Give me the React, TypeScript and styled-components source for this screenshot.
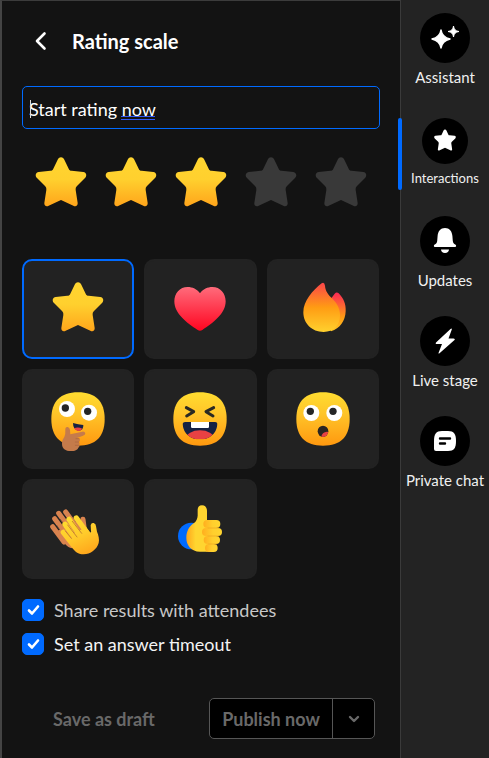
import React, { useState } from "react";
import styled, { createGlobalStyle } from "styled-components";

const GlobalStyle = createGlobalStyle`
  * { box-sizing: border-box; }
  body { margin: 0; background: #131313; color: #fff; font-family: Lato, "Open Sans", sans-serif; }
  button, input { font-family: inherit; }
`;

const Page = styled.div`
  display: flex;
  min-height: 100vh;
`;

const Panel = styled.main`
  flex: 1;
  min-width: 0;
  display: flex;
  flex-direction: column;
  padding: 24px 20px 0;
  border-left: 2px solid #444;
  border-top: 1px solid #3c3c3c;
  background: #131313;
`;

const Header = styled.header`
  display: flex;
  align-items: center;
  gap: 20px;
  height: 32px;
  padding-left: 8px;
`;

const BackButton = styled.button`
  display: flex;
  padding: 0;
  border: 0;
  background: none;
  color: #fff;
  cursor: pointer;
`;

const Title = styled.h1`
  margin: 0;
  font-size: 20px;
  line-height: 24px;
  font-weight: 700;
`;

const Field = styled.div`
  position: relative;
  margin-top: 29px;
`;

const TextInput = styled.input`
  display: block;
  width: 100%;
  height: 43px;
  padding: 2px 6px 0;
  border: 1px solid #006aff;
  border-radius: 5px;
  outline: 0;
  background: #131313;
  color: #fff;
  font-size: 18px;
`;

const Caret = styled.span`
  position: absolute;
  left: 8px;
  top: 14px;
  width: 1px;
  height: 18px;
  background: #ddd;
`;

const WordMark = styled.span`
  position: absolute;
  left: 99px;
  top: 30px;
  width: 34px;
  height: 4px;
  border: solid #3358f4;
  border-width: 1px 0;
`;

const Stars = styled.div`
  display: flex;
  gap: 14px;
  margin: 27px 0 0 11px;
`;

const StarButton = styled.button`
  display: flex;
  padding: 0;
  border: 0;
  background: none;
  cursor: pointer;
`;

const Glyph = styled.svg`
  display: block;
  width: 56px;
  height: 56px;
  overflow: visible;
`;

const Tiles = styled.div`
  display: grid;
  grid-template-columns: repeat(3, 1fr);
  gap: 10px;
  margin-top: 47px;
  padding-right: 1px;
`;

const Tile = styled.button<{ $selected: boolean }>`
  display: flex;
  align-items: center;
  justify-content: center;
  height: 100px;
  padding: 0;
  border: 2px solid ${(p) => (p.$selected ? "#006aff" : "#222")};
  border-radius: 10px;
  background: #222;
  cursor: pointer;
`;

const Options = styled.div`
  display: flex;
  flex-direction: column;
  gap: 10px;
  margin-top: 19px;
`;

const Option = styled.label<{ $bright?: boolean }>`
  display: flex;
  align-items: center;
  gap: 10px;
  font-size: 18px;
  line-height: 24px;
  color: ${(p) => (p.$bright ? "#f4f4f4" : "#c8c8c8")};
`;

const BoxHolder = styled.span`
  display: grid;
  width: 22px;
  height: 22px;

  > * {
    grid-area: 1 / 1;
  }

  > svg {
    pointer-events: none;
  }
`;

const Check = styled.input`
  appearance: none;
  width: 22px;
  height: 22px;
  margin: 0;
  border: 1px solid #006aff;
  border-radius: 5px;
  background: #131313;

  &:checked {
    background: #006aff;
  }
`;

const Footer = styled.footer`
  display: flex;
  align-items: center;
  justify-content: space-between;
  margin-top: 42px;
  padding: 0 5px 0 31px;
`;

const DraftButton = styled.button`
  padding: 0;
  border: 0;
  background: none;
  color: #696969;
  font-size: 18px;
  font-weight: 700;
  line-height: 24px;
`;

const Split = styled.div`
  display: flex;
  height: 41px;
  border: 1px solid #565656;
  border-radius: 5px;
  background: #000;
  overflow: hidden;
`;

const SplitButton = styled.button<{ $menu?: boolean }>`
  display: flex;
  align-items: center;
  justify-content: center;
  padding: 0;
  width: ${(p) => (p.$menu ? "42px" : "122px")};
  border: 0;
  border-left: ${(p) => (p.$menu ? "1px solid #565656" : "0")};
  background: none;
  color: #696969;
  font-size: 18px;
  font-weight: 700;
`;

const Sidebar = styled.nav`
  display: flex;
  flex-direction: column;
  gap: 26px;
  width: 89px;
  padding-top: 13px;
  border-left: 1px solid #3a3a3a;
  background: #232323;
`;

const NavItem = styled.button<{ $active?: boolean }>`
  position: relative;
  display: flex;
  flex-direction: column;
  align-items: center;
  gap: 4px;
  padding: ${(p) => (p.$active ? "5px 0 2px" : "0")};
  border: 0;
  background: none;
  color: #f0f0f0;
  font-size: ${(p) => (p.$active ? "13px" : "15px")};
  line-height: 20px;
  white-space: nowrap;
  cursor: pointer;
`;

const ActiveBar = styled.span`
  position: absolute;
  left: -3px;
  top: 5px;
  width: 4px;
  height: 72px;
  border-radius: 2px;
  background: #006aff;
`;

const Disc = styled.span<{ $small?: boolean }>`
  display: flex;
  align-items: center;
  justify-content: center;
  width: ${(p) => (p.$small ? "46px" : "50px")};
  height: ${(p) => (p.$small ? "46px" : "50px")};
  border-radius: 50%;
  background: #000;
`;

const STAR =
  "M84 4C89 4 92 7 94 11L107 38C109 42 111 44 116 44L151 48C160 49 163 60 156 66L132 90C128 94 128 97 128 102L134 141C135 149 128 153 121 149L84 132L47 149C40 153 33 149 34 141L40 102C40 97 40 94 36 90L12 66C5 60 8 49 17 48L52 44C57 44 59 42 61 38L74 11C76 7 79 4 84 4Z";
const FACE =
  "M84 4C137 4 164 31 164 84C164 137 137 164 84 164C31 164 4 137 4 84C4 31 31 4 84 4Z";

type Stop = [string, string];

function Gradient({ id, stops, flat }: { id: string; stops: Stop[]; flat?: boolean }) {
  return (
    <linearGradient id={id} x1="0" y1="0" x2={flat ? "1" : "0"} y2={flat ? "0" : "1"}>
      {stops.map(([offset, color]) => (
        <stop key={offset} offset={offset} stopColor={color} />
      ))}
    </linearGradient>
  );
}

const GOLD: Stop[] = [["0", "#ffd530"], ["0.45", "#ffd02e"], ["1", "#ffa51b"]];
const SKIN: Stop[] = [["0", "#ffdc30"], ["0.4", "#ffc529"], ["1", "#ff980f"]];

function StarGlyph({ id, lit = true }: { id: string; lit?: boolean }) {
  return (
    <Glyph viewBox="0 0 168 168" aria-hidden="true">
      <defs><Gradient id={id} stops={GOLD} /></defs>
      <path d={STAR} fill={lit ? `url(#${id})` : "#393939"} />
    </Glyph>
  );
}

function HeartGlyph() {
  return (
    <Glyph viewBox="0 0 168 168" aria-hidden="true">
      <defs><Gradient id="heart" stops={[["0", "#ff6b7b"], ["1", "#ff0520"]]} /></defs>
      <path fill="url(#heart)" d="M84 37C75 24 61 18 47 18C23 18 7 37 7 61C7 98 45 126 77 147Q84 151 91 147C123 126 161 98 161 61C161 37 145 18 121 18C107 18 93 24 84 37Z" />
    </Glyph>
  );
}

function FireGlyph() {
  return (
    <Glyph viewBox="0 0 168 168" aria-hidden="true">
      <defs>
        <Gradient id="flameBack" stops={[["0", "#fb2855"], ["0.65", "#ff9d13"], ["1", "#ffc629"]]} />
        <Gradient id="flame" stops={[["0", "#fc4549"], ["0.5", "#ff9c13"], ["1", "#ffd12e"]]} />
      </defs>
      <path fill="url(#flameBack)" d="M109 52L119 38Q125 31 131 37C146 53 153 69 152 91C151 119 135 143 108 151L96 128Z" />
      <path fill="url(#flame)" d="M80 7Q88 2 90 14C91 31 100 41 111 52C126 67 135 83 135 103C135 132 116 153 86 153C50 153 25 127 25 94C25 60 53 28 80 7Z" />
    </Glyph>
  );
}

function Eye({ x, y, px, py }: { x: number; y: number; px: number; py: number }) {
  return (
    <g>
      <circle cx={x} cy={y} r="24" fill="#fff" />
      <circle cx={px} cy={py} r="11" fill="#252525" />
    </g>
  );
}

function ThinkingGlyph() {
  return (
    <Glyph viewBox="0 0 168 168" aria-hidden="true">
      <defs><Gradient id="think" stops={SKIN} /></defs>
      <path d={FACE} fill="url(#think)" />
      <Eye x={51} y={54} px={46} py={51} />
      <Eye x={117} y={65} px={113} py={61} />
      <path d="M69 96Q84 101 100 102Q101 119 85 119Q69 116 69 96Z" fill="#172143" />
      <path d="M72 112Q84 106 97 113Q93 120 84 120Q76 119 72 112Z" fill="#ea4244" />
      <path fill="#c57b4b" d="M46 113Q47 107 53 108Q59 109 60 117L61 130L97 122Q104 121 106 127Q106 132 99 134L81 141Q90 141 90 147Q90 151 86 153Q91 156 88 162Q90 167 85 170C83 177 74 180 63 180C46 180 36 173 36 158C36 148 39 144 43 138Q47 129 46 113Z" />
      <path d="M78 143L87 143M76 153L86 153M76 163L85 163" stroke="#a9643c" strokeWidth="2" strokeLinecap="round" />
    </Glyph>
  );
}

function LaughGlyph() {
  return (
    <Glyph viewBox="0 0 168 168" aria-hidden="true">
      <defs>
        <Gradient id="laugh" stops={SKIN} />
        <clipPath id="grin"><path d="M40 93H129Q137 93 136 101C133 129 112 145 84 145C56 145 35 129 32 101Q31 93 40 93Z" /></clipPath>
      </defs>
      <path d={FACE} fill="url(#laugh)" />
      <path d="M43 50L65 62L44 75M125 50L102 62L123 75" fill="none" stroke="#292923" strokeWidth="9" strokeLinecap="round" strokeLinejoin="round" />
      <g clipPath="url(#grin)">
        <path d="M30 90H138V146H30Z" fill="#152143" />
        <ellipse cx="84" cy="143" rx="42" ry="25" fill="#e84143" />
        <path d="M57 90H111V107Q111 111 107 111H61Q57 111 57 107Z" fill="#fff" />
      </g>
    </Glyph>
  );
}

function WowGlyph() {
  return (
    <Glyph viewBox="0 0 168 168" aria-hidden="true">
      <defs>
        <Gradient id="wow" stops={SKIN} />
        <clipPath id="gasp"><ellipse cx="84" cy="121" rx="16" ry="17" /></clipPath>
      </defs>
      <path d={FACE} fill="url(#wow)" />
      <Eye x={49} y={66} px={46} py={61} />
      <Eye x={118} y={66} px={114} py={61} />
      <g clipPath="url(#gasp)">
        <path d="M60 100H110V145H60Z" fill="#2a2522" />
        <circle cx="96" cy="139" r="17" fill="#e84143" />
      </g>
    </Glyph>
  );
}

function ClapGlyph() {
  return (
    <Glyph viewBox="0 0 168 168" aria-hidden="true">
      <defs>
        <linearGradient id="clap" gradientUnits="userSpaceOnUse" x1="65" y1="45" x2="115" y2="160">
          <stop offset="0" stopColor="#ffdc30" />
          <stop offset="0.5" stopColor="#ffcb2b" />
          <stop offset="1" stopColor="#ffa51b" />
        </linearGradient>
      </defs>
      <g fill="none" stroke="#d9834f" strokeWidth="15" strokeLinecap="round">
        <path d="M47 33L80 78M26 37L65 90M14 53L52 104M8 77L42 123M99 55L104 92" />
      </g>
      <path d="M22 91L56 66L98 60L109 105L70 142Q54 142 43 126Z" fill="#d9834f" />
      <path d="M31 55L40 67M20 73L29 86" stroke="#5d4030" strokeWidth="2" strokeLinecap="round" />
      <g fill="none" stroke="url(#clap)" strokeWidth="16" strokeLinecap="round">
        <path d="M79 51L112 96M57 55L91 105M45 70L79 117M40 94L70 132" />
      </g>
      <path fill="url(#clap)" d="M71 98L108 78L119 93Q125 97 123 89L122 73Q124 64 131 66Q138 68 138 76L141 92C145 101 149 115 146 126C141 145 121 160 101 160C83 160 71 150 62 132Z" />
      <path d="M67 61L95 97M53 72L81 108M46 90L64 112" stroke="#c8842f" strokeWidth="3" strokeLinecap="round" />
    </Glyph>
  );
}

function ThumbGlyph() {
  return (
    <Glyph viewBox="0 0 168 168" aria-hidden="true">
      <defs>
        <Gradient id="palm" flat stops={[["0", "#ffa51b"], ["0.45", "#ffd530"], ["1", "#ffd530"]]} />
        <Gradient id="finger" flat stops={[["0", "#ffae1e"], ["0.55", "#ffcf2d"], ["1", "#ffd530"]]} />
      </defs>
      <circle cx="58" cy="105" r="40" fill="#006aff" />
      <path fill="url(#palm)" d="M77 27Q77 13 90 13Q104 13 105 29L105 152H84C58 151 43 134 43 110C43 91 51 77 65 67Q76 59 77 44Z" />
      <path d="M104 57L120 57L120 152L104 152Z" fill="#ffcb2b" />
      <rect x="94" y="57" width="51" height="24" rx="12" fill="url(#finger)" />
      <rect x="90" y="81" width="60" height="24" rx="12" fill="url(#finger)" />
      <rect x="95" y="105" width="49" height="24" rx="12" fill="url(#finger)" />
      <rect x="99" y="129" width="38" height="24" rx="12" fill="url(#finger)" />
      <path d="M108 81H140M108 105H140M110 129H134" stroke="#eda321" strokeWidth="2" strokeLinecap="round" />
    </Glyph>
  );
}

const AssistantIcon = () => (
  <svg width="28" height="28" viewBox="0 0 28 28" fill="#fff" aria-hidden="true">
    <path d="M10 6Q11 13 19 15Q11 17 10 24Q9 17 1 15Q9 13 10 6Z" stroke="#fff" strokeWidth="1.500" strokeLinejoin="round" />
    <path d="M22.500 2Q23 7 28 7.500Q23 8 22.500 13Q22 8 17 7.500Q22 7 22.500 2Z" stroke="#fff" strokeLinejoin="round" />
  </svg>
);

const InteractionsIcon = () => (
  <svg width="24" height="24" viewBox="0 0 168 168" fill="#fff" aria-hidden="true"><path d={STAR} /></svg>
);

const UpdatesIcon = () => (
  <svg width="24" height="26" viewBox="0 0 24 26" fill="#fff" aria-hidden="true">
    <path d="M12 0C7.500 0 5 3 4.600 8L4.200 13C4 15 3 16 1.800 16.500C.5 17 .5 19 2 19H22C23.500 19 23.500 17 22.200 16.500C21 16 20 15 19.800 13L19.400 8C19 3 16.500 0 12 0ZM8 21.500H16C15.800 23.800 14.500 25 12 25C9.500 25 8.200 23.800 8 21.500Z" />
  </svg>
);

const StageIcon = () => (
  <svg width="24" height="26" viewBox="0 0 24 26" fill="#fff" aria-hidden="true">
    <path d="M17.500 1L3 14.500Q2 16 4 16L9 16L5.500 25Q5.300 26 6.500 25.300L21.500 12Q22.500 10.500 20.500 10.500L15.500 10.500L18.800 1.500Q19 0 17.500 1Z" />
  </svg>
);

const ChatIcon = () => (
  <svg width="24" height="24" viewBox="0 0 24 24" aria-hidden="true">
    <path d="M9 2H15C21 2 23 5 23 12C23 19 21 22 15 22H3Q1 22 1 20V12C1 5 3 2 9 2Z" fill="#fff" />
    <path d="M7 9.500H17M7 14.500H12" stroke="#000" strokeWidth="2.400" strokeLinecap="round" />
  </svg>
);

const REACTIONS = [
  { name: "Star", glyph: <StarGlyph id="tileStar" /> },
  { name: "Heart", glyph: <HeartGlyph /> },
  { name: "Fire", glyph: <FireGlyph /> },
  { name: "Thinking", glyph: <ThinkingGlyph /> },
  { name: "Laughing", glyph: <LaughGlyph /> },
  { name: "Surprised", glyph: <WowGlyph /> },
  { name: "Clapping", glyph: <ClapGlyph /> },
  { name: "Thumbs up", glyph: <ThumbGlyph /> },
];

const NAV = [
  { label: "Assistant", icon: <AssistantIcon /> },
  { label: "Interactions", icon: <InteractionsIcon />, active: true },
  { label: "Updates", icon: <UpdatesIcon /> },
  { label: "Live stage", icon: <StageIcon /> },
  { label: "Private chat", icon: <ChatIcon /> },
];

function CheckOption({ label, bright }: { label: string; bright?: boolean }) {
  const [on, setOn] = useState(true);
  return (
    <Option $bright={bright}>
      <BoxHolder>
        <Check type="checkbox" checked={on} onChange={() => setOn(!on)} />
        <svg width="22" height="22" viewBox="0 0 22 22" fill="none" aria-hidden="true">
          {on && <path d="M7 11.500L10 14.500L16 7.500" stroke="#fff" strokeWidth="2.600" strokeLinecap="round" strokeLinejoin="round" />}
        </svg>
      </BoxHolder>
      {label}
    </Option>
  );
}

export default function App() {
  const [question, setQuestion] = useState("Start rating now");
  const [rating, setRating] = useState(3);
  const [reaction, setReaction] = useState("Star");

  return (
    <>
      <GlobalStyle />
      <Page>
        <Panel>
          <Header>
            <BackButton type="button" aria-label="Back">
              <svg width="22" height="22" viewBox="0 0 22 22" fill="none" aria-hidden="true">
                <path d="M14.500 3.500L7 11L14.500 18.500" stroke="currentColor" strokeWidth="2.600" strokeLinecap="round" strokeLinejoin="round" />
              </svg>
            </BackButton>
            <Title>Rating scale</Title>
          </Header>
          <Field>
            <TextInput aria-label="Question" value={question} onChange={(e) => setQuestion(e.target.value)} />
            <Caret />
            <WordMark />
          </Field>
          <Stars>
            {[1, 2, 3, 4, 5].map((n) => (
              <StarButton key={n} type="button" aria-label={`Rate ${n}`} onClick={() => setRating(n)}>
                <StarGlyph id={`rate${n}`} lit={n <= rating} />
              </StarButton>
            ))}
          </Stars>
          <Tiles>
            {REACTIONS.map(({ name, glyph }) => (
              <Tile key={name} type="button" aria-label={name} $selected={name === reaction} onClick={() => setReaction(name)}>
                {glyph}
              </Tile>
            ))}
          </Tiles>
          <Options>
            <CheckOption label="Share results with attendees" />
            <CheckOption label="Set an answer timeout" bright />
          </Options>
          <Footer>
            <DraftButton type="button">Save as draft</DraftButton>
            <Split>
              <SplitButton type="button">Publish now</SplitButton>
              <SplitButton type="button" $menu aria-label="More publish options">
                <svg width="12" height="8" viewBox="0 0 12 8" fill="none" aria-hidden="true">
                  <path d="M2 2L6 6L10 2" stroke="currentColor" strokeWidth="2.400" strokeLinecap="round" strokeLinejoin="round" />
                </svg>
              </SplitButton>
            </Split>
          </Footer>
        </Panel>
        <Sidebar aria-label="Event tools">
          {NAV.map(({ label, icon, active }) => (
            <NavItem key={label} type="button" $active={active}>
              {active && <ActiveBar />}
              <Disc $small={active}>{icon}</Disc>
              {label}
            </NavItem>
          ))}
        </Sidebar>
      </Page>
    </>
  );
}
